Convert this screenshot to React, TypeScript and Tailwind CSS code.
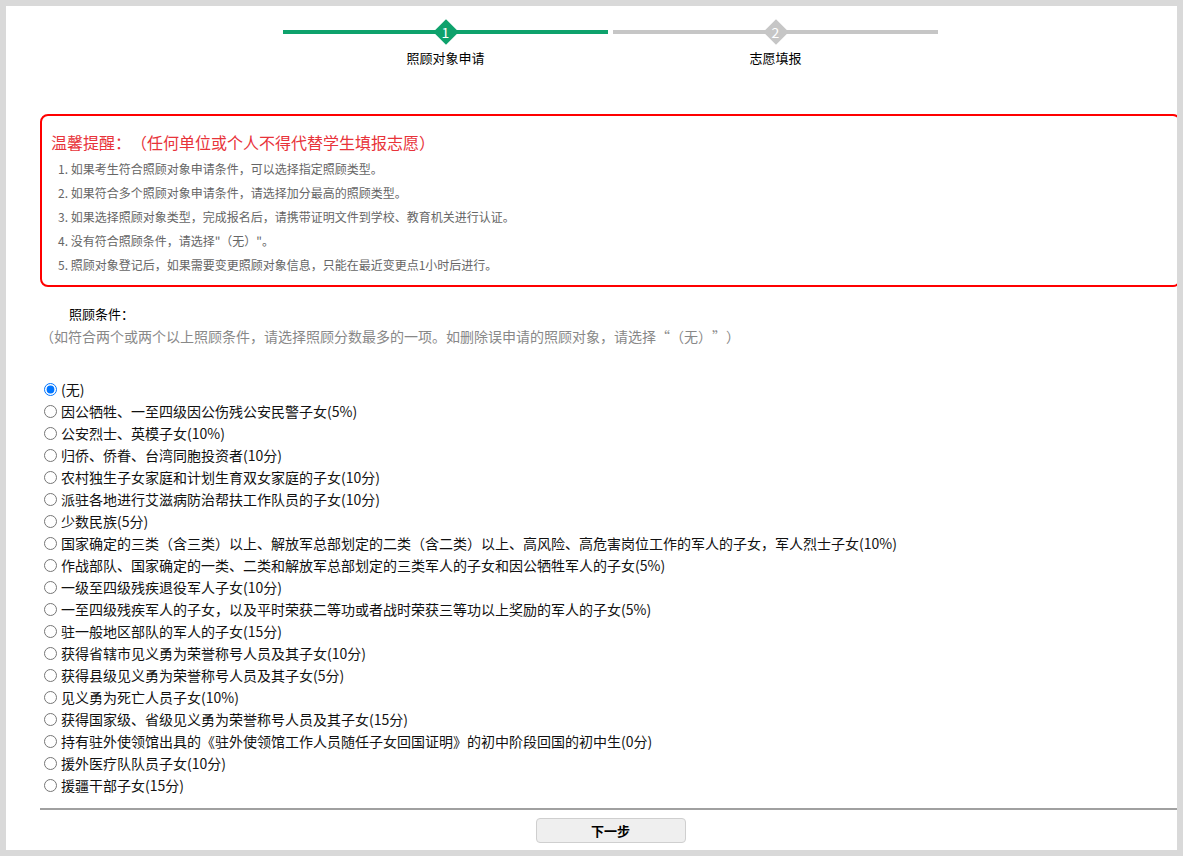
import React, { useState } from "react";

const options = [
  "(无)",
  "因公牺牲、一至四级因公伤残公安民警子女(5%)",
  "公安烈士、英模子女(10%)",
  "归侨、侨眷、台湾同胞投资者(10分)",
  "农村独生子女家庭和计划生育双女家庭的子女(10分)",
  "派驻各地进行艾滋病防治帮扶工作队员的子女(10分)",
  "少数民族(5分)",
  "国家确定的三类（含三类）以上、解放军总部划定的二类（含二类）以上、高风险、高危害岗位工作的军人的子女，军人烈士子女(10%)",
  "作战部队、国家确定的一类、二类和解放军总部划定的三类军人的子女和因公牺牲军人的子女(5%)",
  "一级至四级残疾退役军人子女(10分)",
  "一至四级残疾军人的子女，以及平时荣获二等功或者战时荣获三等功以上奖励的军人的子女(5%)",
  "驻一般地区部队的军人的子女(15分)",
  "获得省辖市见义勇为荣誉称号人员及其子女(10分)",
  "获得县级见义勇为荣誉称号人员及其子女(5分)",
  "见义勇为死亡人员子女(10%)",
  "获得国家级、省级见义勇为荣誉称号人员及其子女(15分)",
  "持有驻外使领馆出具的《驻外使领馆工作人员随任子女回国证明》的初中阶段回国的初中生(0分)",
  "援外医疗队队员子女(10分)",
  "援疆干部子女(15分)",
];

const tips = [
  "1. 如果考生符合照顾对象申请条件，可以选择指定照顾类型。",
  "2. 如果符合多个照顾对象申请条件，请选择加分最高的照顾类型。",
  "3. 如果选择照顾对象类型，完成报名后，请携带证明文件到学校、教育机关进行认证。",
  "4. 没有符合照顾条件，请选择\"（无）\"。",
  "5. 照顾对象登记后，如果需要变更照顾对象信息，只能在最近变更点1小时后进行。",
];

function Step({ num, label, active }: { num: number; label: string; active: boolean }) {
  return (
    <div className="w-[325px] flex flex-col items-center">
      <div className="relative w-full h-[25px] flex items-center">
        <div className={`w-full h-[4px] ${active ? "bg-[#0ea26c]" : "bg-[#c6c6c6]"}`} />
        {/* diamond marker */}
        <div className="absolute inset-0 flex items-center justify-center">
          <div
            className={`w-[18px] h-[18px] rotate-45 ${active ? "bg-[#0ea26c]" : "bg-[#c6c6c6]"}`}
          />
          <span className="absolute text-white text-[14px] leading-none">{num}</span>
        </div>
      </div>
      <div className="mt-[5px] text-[13px] leading-[18px] text-black">{label}</div>
    </div>
  );
}

export default function App() {
  const [picked, setPicked] = useState(0);

  return (
    <div
      className="h-[856px] bg-[#d9d9d9] pt-[6px] pl-[6px] [text-spacing-trim:space-all]"
      style={{ fontFamily: '"Noto Sans CJK SC", "Noto Sans", sans-serif' }}
    >
      <div className="w-[1171px] h-[844px] bg-white overflow-hidden">
        <div className="ml-[34px] w-[1141px]">
          {/* steps */}
          <div className="pt-[13px] flex justify-center gap-[5px]">
            <Step num={1} label="照顾对象申请" active />
            <Step num={2} label="志愿填报" active={false} />
          </div>

          {/* reminder box */}
          <div className="mt-[47px] h-[173px] border-2 border-[#ff0000] rounded-[8px] pt-[14px] pl-[9px]">
            <div className="text-[16px] leading-[24px] text-[#e8333a]">
              温馨提醒：（任何单位或个人不得代替学生填报志愿）
            </div>
            <div className="mt-[3px] pl-[7px] text-[12px] leading-[24px] text-[#666]">
              {tips.map((t) => (
                <div key={t}>{t}</div>
              ))}
            </div>
          </div>

          {/* conditions */}
          <div className="mt-[17px] pl-[29px] text-[13px] leading-[20px] text-black">照顾条件：</div>
          <div className="mt-[2px] text-[14px] leading-[20px] text-[#888]">
            （如符合两个或两个以上照顾条件，请选择照顾分数最多的一项。如删除误申请的照顾对象，请选择“（无）”）
          </div>

          <div className="mt-[32px]">
            {options.map((o, i) => (
              <label key={o} className="flex items-center h-[22px] text-[14px] text-[#111]">
                <input
                  type="radio"
                  name="care"
                  checked={picked === i}
                  onChange={() => setPicked(i)}
                  className="ml-[4px] mr-[4px] w-[13px] h-[13px]"
                />
                <span>{o}</span>
              </label>
            ))}
          </div>

          <div className="mt-[12px] h-[2px] bg-[#a0a0a0]" />

          <div className="mt-[8px] flex justify-center">
            <button className="w-[150px] h-[25px] bg-[#efefef] border border-[#cfcfcf] rounded-[4px] text-[13px] font-bold text-black">
              下一步
            </button>
          </div>
        </div>
      </div>
    </div>
  );
}
